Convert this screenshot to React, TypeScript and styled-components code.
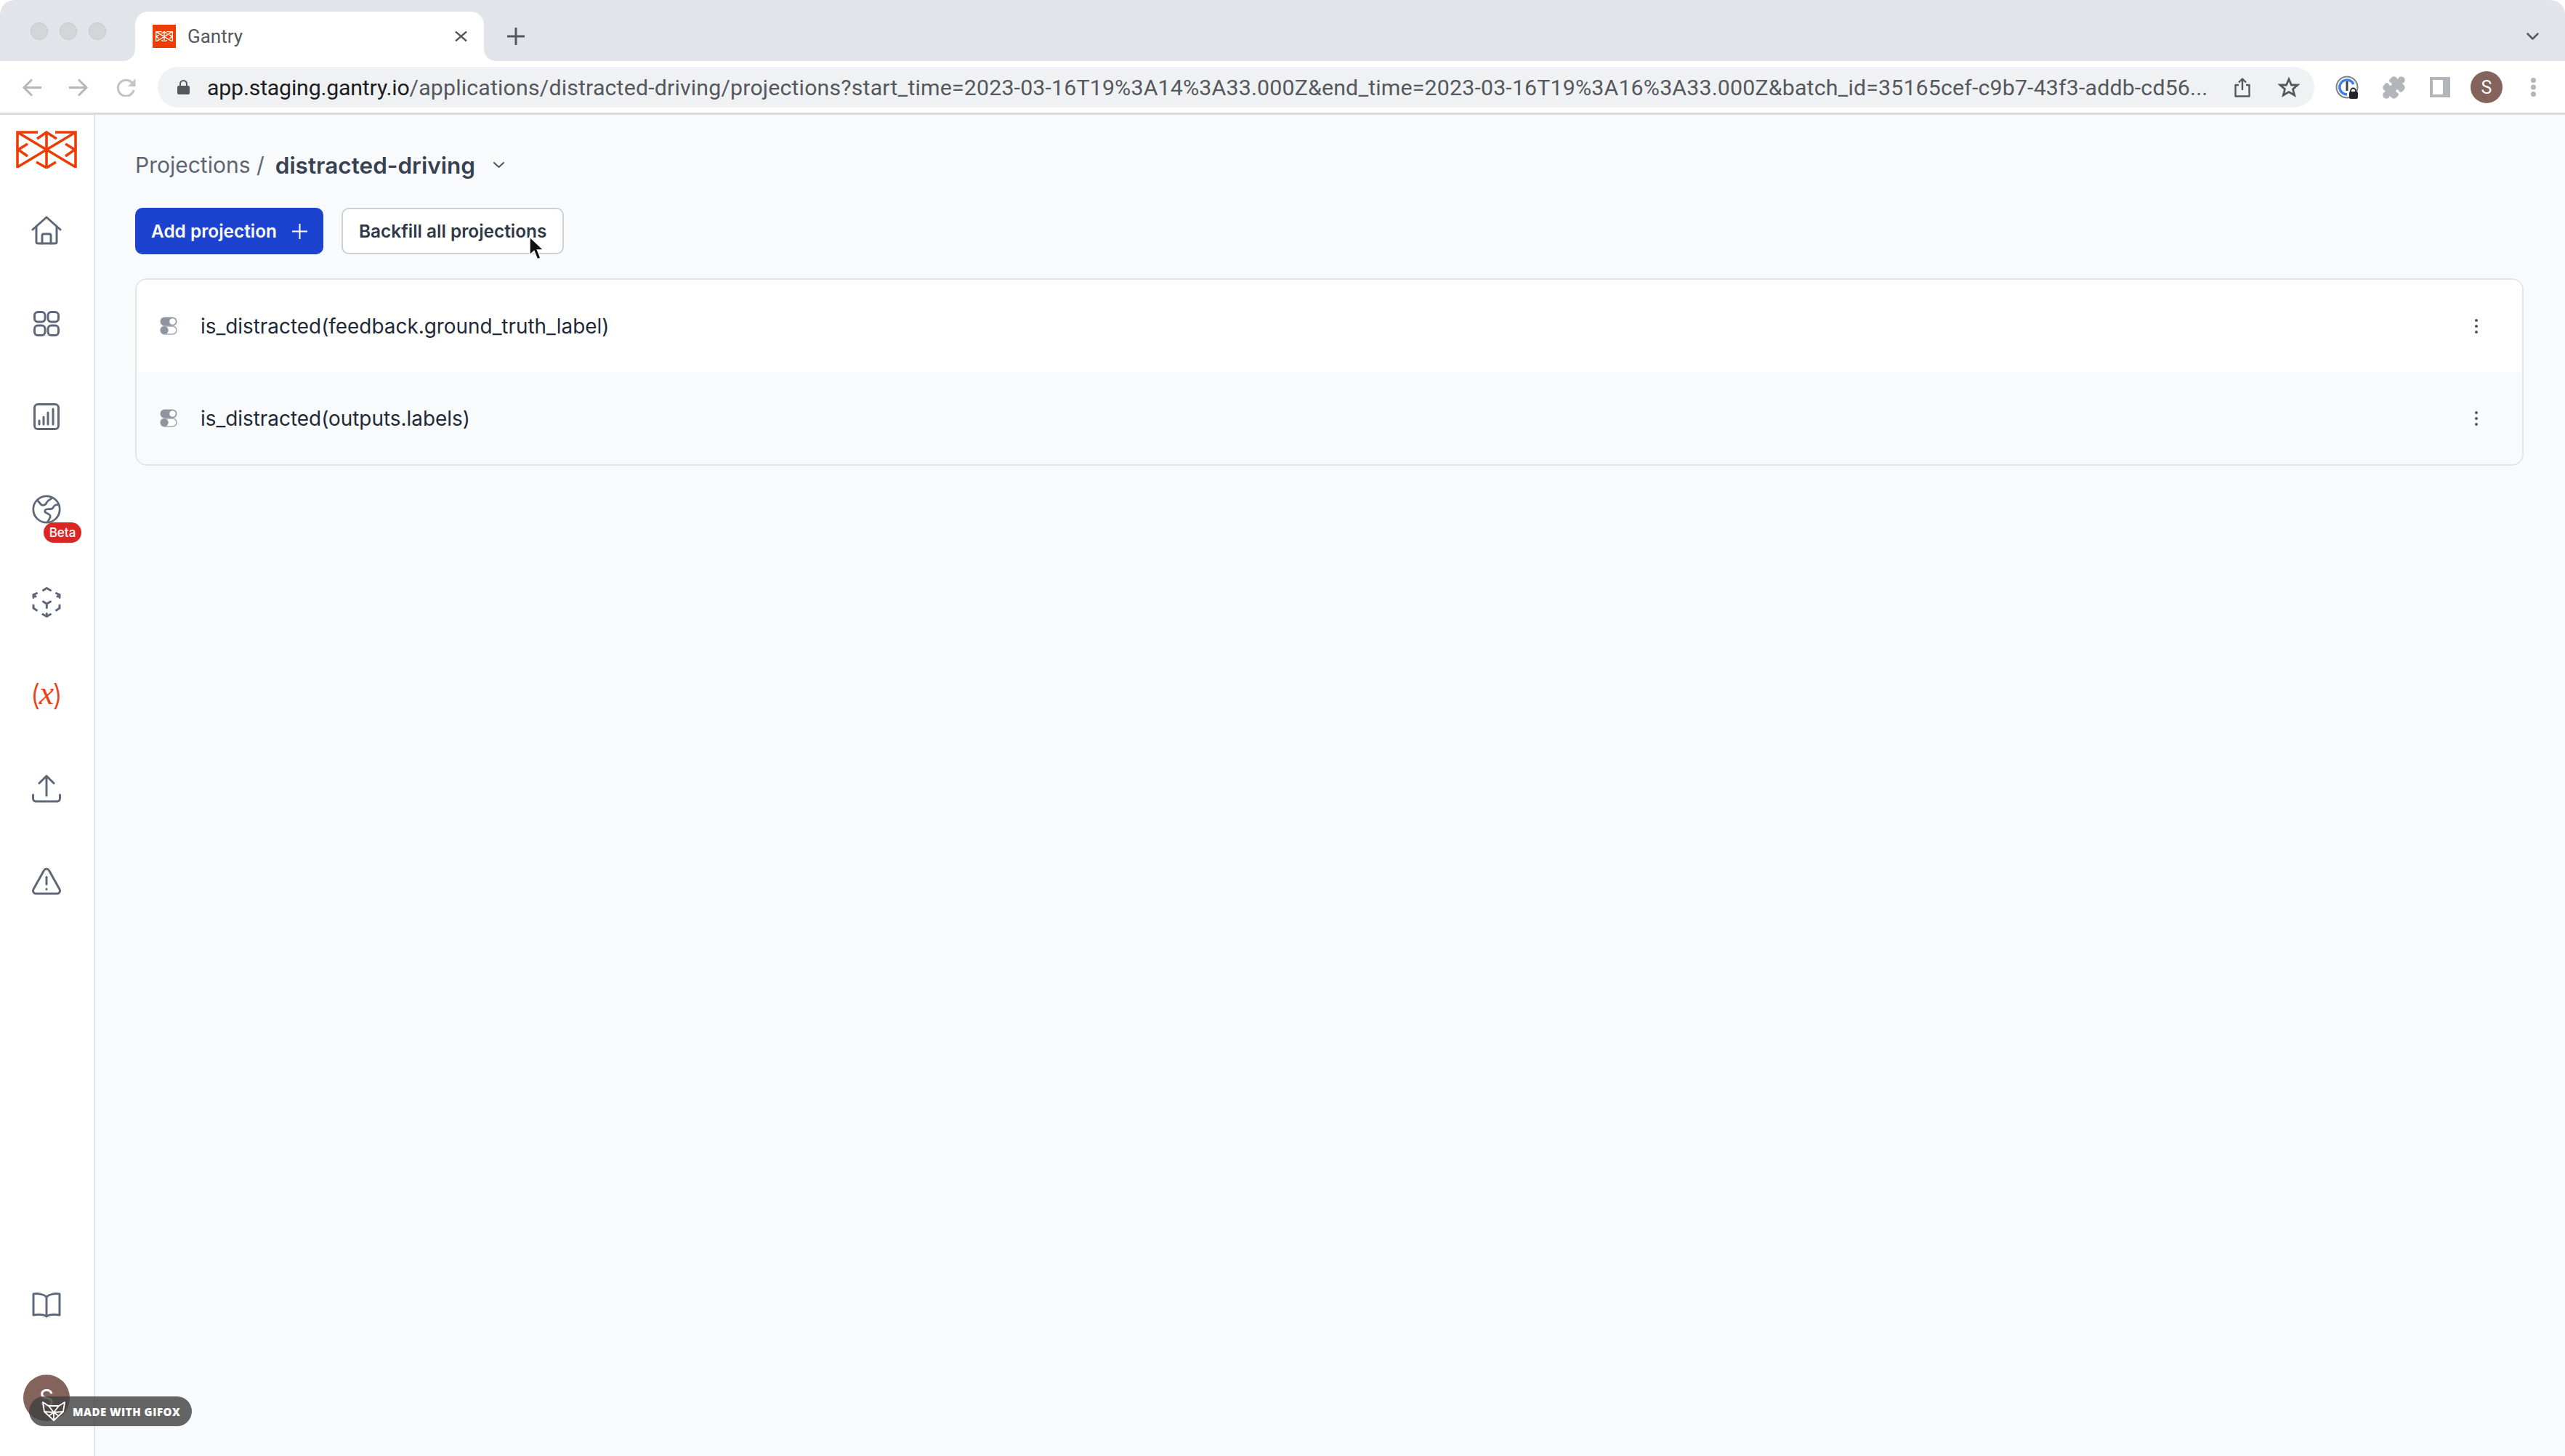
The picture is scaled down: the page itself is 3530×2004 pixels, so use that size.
import * as React from "react";
import styled, { createGlobalStyle } from "styled-components";
import { Puzzle } from "lucide-react";

const GlobalStyle = createGlobalStyle`
  html, body {
    margin: 0;
    padding: 0;
    background: #fff;
  }
  * {
    box-sizing: border-box;
  }
`;

const Window = styled.div`
  position: relative;
  display: flex;
  flex-direction: column;
  width: 3530px;
  height: 2004px;
  overflow: hidden;
  font-family: Inter, "Liberation Sans", sans-serif;
  background: #fff;
`;

// Browser chrome
const TabStrip = styled.div`
  display: flex;
  align-items: flex-end;
  height: 84px;
  padding-left: 42px;
  background: #e1e4e8;
  border-radius: 20px 20px 0 0;
`;

const TrafficLights = styled.div`
  display: flex;
  gap: 16px;
  align-self: flex-start;
  margin-top: 31px;
`;

const Light = styled.span`
  width: 24px;
  height: 24px;
  border-radius: 50%;
  background: #d3d5d8;
  border: 1px solid #c5c7cb;
`;

const Tab = styled.div`
  position: relative;
  display: flex;
  align-items: center;
  width: 480px;
  height: 68px;
  margin-left: 40px;
  padding: 0 23px 0 24px;
  background: #fff;
  border-radius: 18px 18px 0 0;

  &:before,
  &:after {
    content: "";
    position: absolute;
    bottom: 0;
    width: 16px;
    height: 16px;
    background: radial-gradient(circle at var(--cx) 0, #e1e4e8 15.5px, #fff 16px);
  }
  &:before {
    --cx: 0;
    left: -16px;
  }
  &:after {
    --cx: 100%;
    right: -16px;
  }
`;

const Favicon = styled.span`
  display: flex;
  align-items: center;
  justify-content: center;
  width: 32px;
  height: 32px;
  background: #ee3c06;
`;

const TabTitle = styled.span`
  flex: 1;
  margin-left: 16px;
  font-family: Roboto, sans-serif;
  font-size: 26px;
  color: #55585e;
`;

const NewTab = styled.span`
  display: flex;
  align-self: center;
  margin: 16px 0 0 32px;
`;

const TabListChevron = styled.span`
  display: flex;
  align-self: center;
  margin: 16px 35px 0 auto;
`;

const Toolbar = styled.div`
  display: flex;
  align-items: center;
  height: 74px;
  padding: 1px 0 0 11px;
  background: #fff;
  border-bottom: 3px solid #d9dbde;
`;

const NavButton = styled.span`
  display: flex;
  justify-content: center;
  width: 65px;
`;

const AddressBar = styled.div`
  display: flex;
  align-items: center;
  width: 2968px;
  height: 56px;
  margin-left: 11px;
  padding: 0 20px 0 27px;
  background: #eff1f3;
  border-radius: 28px;
`;

const Lock = styled.span`
  display: flex;
  margin-right: 24px;
`;

const Url = styled.div`
  flex: 1;
  overflow: hidden;
  white-space: nowrap;
  font-family: Roboto, sans-serif;
  font-size: 30.3px;
  letter-spacing: 0.17px;
  color: #55585e;

  b {
    font-weight: 400;
    letter-spacing: -0.2px;
    color: #1d1e22;
  }
`;

const BarActions = styled.div`
  display: flex;
  align-items: center;
  gap: 38px;
`;

const ToolSlots = styled.div`
  display: flex;
  margin-left: 13px;
`;

const ToolSlot = styled.span`
  display: flex;
  align-items: center;
  justify-content: center;
  width: 64px;
  height: 44px;
`;

const SidePanelIcon = styled.span`
  width: 28px;
  height: 28px;
  background: #fff;
  border: 4px solid #b3b5ba;
  border-right-width: 10px;
`;

const ProfileAvatar = styled.span`
  display: flex;
  align-items: center;
  justify-content: center;
  width: 44px;
  height: 44px;
  border-radius: 50%;
  background: #84635c;
  color: #fff;
  font-family: Roboto, sans-serif;
  font-size: 25px;
`;

// App
const Body = styled.div`
  flex: 1;
  display: flex;
  min-height: 0;
`;

const Sidebar = styled.nav`
  display: flex;
  flex-direction: column;
  align-items: center;
  flex: none;
  width: 131px;
  padding: 0 1px 48px 0;
  background: #fff;
  border-right: 2px solid #e3e5ea;
`;

const LogoWrap = styled.div`
  display: flex;
  align-items: flex-start;
  height: 95px;
  padding-top: 22px;
`;

const NavItem = styled.div<{ $active?: boolean }>`
  position: relative;
  display: flex;
  align-items: center;
  justify-content: center;
  width: 100%;
  height: 128px;
  color: ${(p) => (p.$active ? "#e8421a" : "#5f6879")};
`;

const Spacer = styled.div`
  flex: 1;
`;

const BetaBadge = styled.span`
  position: absolute;
  left: 60px;
  top: 82px;
  width: 52px;
  height: 28px;
  border-radius: 14px;
  background: #dc2626;
  color: #fff;
  font-size: 17px;
  font-weight: 500;
  line-height: 28px;
  text-align: center;
`;

const VariableIcon = styled.span`
  display: flex;
  align-items: center;
  line-height: 1;
`;

const Paren = styled.span`
  font-family: Inter, sans-serif;
  font-size: 40px;
  font-weight: 300;
`;

const VarX = styled.span`
  margin: -6px -2px 0;
  font-family: "Liberation Serif", serif;
  font-style: italic;
  font-size: 46px;
  font-weight: 400;
`;

const UserAvatar = styled.div`
  display: flex;
  align-items: center;
  justify-content: center;
  width: 64px;
  height: 64px;
  margin-top: 32px;
  border-radius: 50%;
  background: #84635c;
  color: #fff;
  font-size: 32px;
`;

const Main = styled.main`
  flex: 1;
  min-width: 0;
  padding: 47px 57px 0 55px;
  background: #f9fafb;
`;

const Breadcrumb = styled.div`
  display: flex;
  align-items: center;
  height: 44px;
`;

const Crumb = styled.span`
  font-size: 30px;
  color: #5d6574;
`;

const CurrentCrumb = styled.span`
  margin-left: 15px;
  font-size: 31.5px;
  font-weight: 600;
  color: #374151;
`;

const CrumbChevron = styled.span`
  display: flex;
  margin-left: 24px;
`;

const Actions = styled.div`
  display: flex;
  gap: 25px;
  margin-top: 37px;
`;

const Button = styled.button<{ $primary?: boolean }>`
  position: relative;
  display: flex;
  align-items: center;
  justify-content: center;
  gap: 21px;
  height: 64px;
  padding: 0 22px;
  border-radius: 10px;
  border: ${(p) => (p.$primary ? "none" : "2px solid #cdd0d6")};
  background: ${(p) => (p.$primary ? "#1c43d0" : "#fff")};
  color: ${(p) => (p.$primary ? "#fff" : "#2f3847")};
  font-family: Inter, sans-serif;
  font-size: 24.4px;
  font-weight: 600;
`;

const Cursor = styled.svg`
  position: absolute;
  left: 255px;
  top: 36px;
`;

const Card = styled.div`
  margin-top: 33px;
  overflow: hidden;
  border: 2px solid #e3e5ea;
  border-radius: 16px;
`;

const Row = styled.div<{ $white?: boolean }>`
  display: flex;
  align-items: center;
  height: 127px;
  padding: 0 61px 0 32px;
  background: ${(p) => (p.$white ? "#fff" : "#f9fafb")};
`;

const RowName = styled.span`
  flex: 1;
  margin-left: 32px;
  font-size: 27.9px;
  color: #1f2937;
`;

const MoreDots = styled.span`
  display: flex;
  flex-direction: column;
  gap: 4px;

  i {
    width: 4px;
    height: 4px;
    border-radius: 50%;
    background: #4b5563;
  }
`;

const GifoxBadge = styled.div`
  position: absolute;
  left: 40px;
  top: 1922px;
  display: flex;
  align-items: center;
  gap: 10px;
  width: 224px;
  height: 41px;
  padding-left: 18px;
  border-radius: 21px;
  background: rgba(62, 62, 62, 0.8);
  color: #fff;
  font-family: "Open Sans", sans-serif;
  font-size: 15px;
  font-weight: 800;
  letter-spacing: 0.5px;
  white-space: nowrap;
`;

// Icons
const GantryMark = ({ size, color }: { size: number; color: string }) => (
  <svg width={size} height={(size * 52) / 84} viewBox="0 0 84 52" fill="none" stroke={color} strokeWidth={size > 40 ? 3.6 : 5}>
    <path d="M30 2H2V51M2 2L82 50M54 2H82V51M82 2L2 50M42 1V51" />
    <path d="M29 11L42 2L56 11M28 43L42 51L55 43M16 18L3 26L16 35M68 18L81 26L68 35" />
  </svg>
);

const HomeIcon = () => (
  <svg width="42" height="40" viewBox="0 0 42 40" fill="none" stroke="currentColor" strokeWidth="3" strokeLinecap="round" strokeLinejoin="round">
    <path d="M2 19L21 2L40 19" />
    <path d="M7 15V36a2 2 0 0 0 2 2H33a2 2 0 0 0 2-2V15" />
    <path d="M15 38V27a2 2 0 0 1 2-2h8a2 2 0 0 1 2 2V38" />
  </svg>
);

const GridIcon = () => (
  <svg width="36" height="35" viewBox="0 0 36 35" fill="none" stroke="currentColor" strokeWidth="3">
    <rect x="1.5" y="1.5" width="14.5" height="13.5" rx="4.5" />
    <rect x="20" y="1.5" width="14.5" height="13.5" rx="4.5" />
    <rect x="1.5" y="20" width="14.5" height="13.5" rx="4.5" />
    <rect x="20" y="20" width="14.5" height="13.5" rx="4.5" />
  </svg>
);

const ChartIcon = () => (
  <svg width="36" height="37" viewBox="0 0 36 37" fill="none" stroke="currentColor" strokeWidth="3" strokeLinecap="round">
    <rect x="1.5" y="1.5" width="33" height="34" rx="4.5" />
    <path d="M8 29V24M14 29V19M20 29V13M27 29V8" />
  </svg>
);

const GlobeIcon = () => (
  <svg width="40" height="40" viewBox="0 0 40 40" fill="none" stroke="currentColor" strokeWidth="2.800" strokeLinejoin="round">
    <circle cx="20" cy="20" r="18.2" />
    <path d="M7 7L13 14C16 15 19 14 20 11C21 8 25 7 28 4" />
    <path d="M37 14C33 13 30 15 29 18C27 21 23 19 20 20C17 21 17 24 20 25C24 27 26 28 25 31C24 34 22 36 21 38" />
  </svg>
);

const CubeIcon = () => (
  <svg width="40" height="42" viewBox="0 0 40 42" fill="none" stroke="currentColor" strokeWidth="3" strokeLinecap="round" strokeLinejoin="round">
    <path d="M15.500 4.500L20.300 1.500L25.500 4.500" />
    <path d="M2 14.500V10.500L6.500 8.500M2 10.500L5 13" />
    <path d="M38 14.500V10.500L33.500 8.500M38 10.500L35 13" />
    <path d="M2 25V29L6.500 32" />
    <path d="M38 25V29L33.500 32" />
    <path d="M15 37.500L20.300 40.500L25.500 37.500M20.300 36.500V40.500" />
    <path d="M15.500 20L20.300 23.300L25.500 20M20.300 23.300V28.500" />
  </svg>
);

const UploadIcon = () => (
  <svg width="40" height="39" viewBox="0 0 40 39" fill="none" stroke="currentColor" strokeWidth="3" strokeLinecap="round" strokeLinejoin="round">
    <path d="M20 2V29M10 12L20 2L30 12" />
    <path d="M1.5 28V33a4 4 0 0 0 4 4H34.500a4 4 0 0 0 4-4V28" />
  </svg>
);

const WarningIcon = () => (
  <svg width="42" height="38" viewBox="0 0 42 38" fill="none" stroke="currentColor" strokeWidth="3" strokeLinecap="round" strokeLinejoin="round">
    <path d="M17.500 4a4 4 0 0 1 7 0L39 30a4 4 0 0 1-3.500 6H6.500a4 4 0 0 1-3.500-6Z" />
    <path d="M21 13V23M21 29.500V30" />
  </svg>
);

const BookIcon = () => (
  <svg width="40" height="35" viewBox="0 0 40 35" fill="none" stroke="currentColor" strokeWidth="3" strokeLinejoin="round">
    <path d="M20 6C16 2 8 1 2 2V31C8 30 16 30 20 33C24 30 32 30 38 31V2C32 1 24 2 20 6Z" />
    <path d="M20 6V33" />
  </svg>
);

const ToggleIcon = () => (
  <svg width="24" height="25" viewBox="0 0 24 25">
    <rect x="0.5" y="0.500" width="23" height="12" rx="6" fill="#8f94a0" />
    <circle cx="17.500" cy="6.500" r="4.300" fill="#fff" />
    <rect x="1" y="13" width="22" height="11" rx="5.500" fill="#fff" stroke="#a2a6b0" strokeWidth="1.500" />
    <circle cx="6.500" cy="18.500" r="5.200" fill="#8f94a0" />
  </svg>
);

const Chevron = ({ w, h, color, sw }: { w: number; h: number; color: string; sw: number }) => (
  <svg width={w} height={h} viewBox={`0 0 ${w} ${h}`} fill="none" stroke={color} strokeWidth={sw} strokeLinecap="round" strokeLinejoin="round">
    <path d={`M${sw} ${sw}L${w / 2} ${h - sw}L${w - sw} ${sw}`} />
  </svg>
);

const Arrow = ({ flip }: { flip?: boolean }) => (
  <svg width="27" height="25" viewBox="0 0 27 25" fill="none" stroke="#b4b7bc" strokeWidth="3" style={flip ? { transform: "scaleX(-1)" } : undefined}>
    <path d="M27 12.500H3M14 1.500L3 12.500L14 23.500" />
  </svg>
);

const ReloadIcon = () => (
  <svg width="27" height="25" viewBox="0 0 27 25" fill="none">
    <path d="M22.500 7A11 11 0 1 0 24 16" stroke="#c0c3c7" strokeWidth="3" />
    <path d="M26.500 0V11H16Z" fill="#c0c3c7" />
  </svg>
);

const LockIcon = () => (
  <svg width="17" height="20" viewBox="0 0 17 20" fill="none">
    <path d="M4 9V5.500a4.500 4.500 0 0 1 9 0V9" stroke="#55585e" strokeWidth="2" />
    <rect y="8" width="17" height="12" rx="2" fill="#55585e" />
  </svg>
);

const ShareIcon = () => (
  <svg width="22" height="27" viewBox="0 0 22 27" fill="none" stroke="#55585e" strokeWidth="2.400" strokeLinejoin="round">
    <path d="M6 10H1.500V25.500H20.500V10H16" />
    <path d="M11 17V1.500M6 6.500L11 1.500L16 6.500" />
  </svg>
);

const StarIcon = () => (
  <svg width="30" height="28" viewBox="0 0 30 28" fill="none" stroke="#55585e" strokeWidth="2.800" strokeLinejoin="miter">
    <path d="M15 3L18.500 11H27L20.500 16.800L22.700 25L15 20.500L7.300 25L9.500 16.800L3 11H11.500Z" />
  </svg>
);

const OnePasswordIcon = () => (
  <svg width="32" height="32" viewBox="0 0 32 32" fill="none">
    <circle cx="16" cy="16" r="14.500" stroke="#7d8186" strokeWidth="2" />
    <path d="M25 12A10 10 0 1 0 16 26" stroke="#3f7fe6" strokeWidth="3.500" />
    <rect x="14.500" y="8" width="3" height="13" fill="#3d4148" />
    <path d="M21 23v-2a3.500 3.500 0 0 1 7 0v2" stroke="#22262c" strokeWidth="1.800" />
    <rect x="19" y="22" width="12" height="10" rx="2" fill="#22262c" />
  </svg>
);

const MenuDotsIcon = () => (
  <svg width="7" height="26" viewBox="0 0 7 26" fill="#b3b5ba">
    <circle cx="3.500" cy="3.500" r="3.500" />
    <circle cx="3.500" cy="13" r="3.500" />
    <circle cx="3.500" cy="22.500" r="3.500" />
  </svg>
);

const PlusIcon = ({ size, color, sw }: { size: number; color: string; sw: number }) => (
  <svg width={size} height={size} viewBox={`0 0 ${size} ${size}`} stroke={color} strokeWidth={sw}>
    <path d={`M${size / 2} 0V${size}M0 ${size / 2}H${size}`} />
  </svg>
);

const CloseIcon = () => (
  <svg width="17" height="14" viewBox="0 0 17 14" stroke="#55585e" strokeWidth="2.400">
    <path d="M1 0.500L16 13.500M16 0.500L1 13.500" />
  </svg>
);

const FoxIcon = () => (
  <svg width="32" height="27" viewBox="0 0 32 27" fill="none" stroke="#fff" strokeWidth="1.800" strokeLinejoin="round">
    <path d="M1 1L9 6H23L31 1L29 14L16 26L3 14Z" />
    <path d="M9 6L16 15L23 6M3 14L16 15L29 14M16 15V26M9 20L16 15L23 20" />
  </svg>
);

const CursorIcon = () => (
  <Cursor width="24" height="36" viewBox="0 0 24 34">
    <path d="M2 1V26L8 20.500L12.500 32L17 30L12.500 19H21Z" fill="#111" stroke="#fff" strokeWidth="1.500" />
  </Cursor>
);

const PROJECTIONS = [
  { name: "is_distracted(feedback.ground_truth_label)", white: true },
  { name: "is_distracted(outputs.labels)", white: false },
];

const App = () => {
  return (
    <Window>
      <GlobalStyle />
      <TabStrip>
        <TrafficLights>
          <Light />
          <Light />
          <Light />
        </TrafficLights>
        <Tab>
          <Favicon>
            <GantryMark size={24} color="#fff" />
          </Favicon>
          <TabTitle>Gantry</TabTitle>
          <CloseIcon />
        </Tab>
        <NewTab>
          <PlusIcon size={24} color="#55585e" sw={3} />
        </NewTab>
        <TabListChevron>
          <Chevron w={19} h={12} color="#55585e" sw={2.5} />
        </TabListChevron>
      </TabStrip>
      <Toolbar>
        <NavButton>
          <Arrow />
        </NavButton>
        <NavButton>
          <Arrow flip />
        </NavButton>
        <NavButton>
          <ReloadIcon />
        </NavButton>
        <AddressBar>
          <Lock>
            <LockIcon />
          </Lock>
          <Url>
            <b>app.staging.gantry.io</b>
            /applications/distracted-driving/projections?start_time=2023-03-16T19%3A14%3A33.000Z&amp;end_time=2023-03-16T19%3A16%3A33.000Z&amp;batch_id=35165cef-c9b7-43f3-addb-cd56...
          </Url>
          <BarActions>
            <ShareIcon />
            <StarIcon />
          </BarActions>
        </AddressBar>
        <ToolSlots>
          <ToolSlot>
            <OnePasswordIcon />
          </ToolSlot>
          <ToolSlot>
            <Puzzle size={33} color="#b3b5ba" fill="#b3b5ba" />
          </ToolSlot>
          <ToolSlot>
            <SidePanelIcon />
          </ToolSlot>
          <ToolSlot>
            <ProfileAvatar>S</ProfileAvatar>
          </ToolSlot>
          <ToolSlot>
            <MenuDotsIcon />
          </ToolSlot>
        </ToolSlots>
      </Toolbar>
      <Body>
        <Sidebar>
          <LogoWrap>
            <GantryMark size={84} color="#ee3c06" />
          </LogoWrap>
          <NavItem>
            <HomeIcon />
          </NavItem>
          <NavItem>
            <GridIcon />
          </NavItem>
          <NavItem>
            <ChartIcon />
          </NavItem>
          <NavItem>
            <GlobeIcon />
            <BetaBadge>Beta</BetaBadge>
          </NavItem>
          <NavItem>
            <CubeIcon />
          </NavItem>
          <NavItem $active>
            <VariableIcon>
              <Paren>(</Paren>
              <VarX>x</VarX>
              <Paren>)</Paren>
            </VariableIcon>
          </NavItem>
          <NavItem>
            <UploadIcon />
          </NavItem>
          <NavItem>
            <WarningIcon />
          </NavItem>
          <Spacer />
          <NavItem>
            <BookIcon />
          </NavItem>
          <UserAvatar>S</UserAvatar>
        </Sidebar>
        <Main>
          <Breadcrumb>
            <Crumb>Projections /</Crumb>
            <CurrentCrumb>distracted-driving</CurrentCrumb>
            <CrumbChevron>
              <Chevron w={17} h={10} color="#4b5563" sw={2} />
            </CrumbChevron>
          </Breadcrumb>
          <Actions>
            <Button $primary>
              Add projection
              <PlusIcon size={21} color="#fff" sw={2} />
            </Button>
            <Button>
              Backfill all projections
              <CursorIcon />
            </Button>
          </Actions>
          <Card>
            {PROJECTIONS.map((row) => (
              <Row key={row.name} $white={row.white}>
                <ToggleIcon />
                <RowName>{row.name}</RowName>
                <MoreDots>
                  <i />
                  <i />
                  <i />
                </MoreDots>
              </Row>
            ))}
          </Card>
        </Main>
      </Body>
      <GifoxBadge>
        <FoxIcon />
        MADE WITH GIFOX
      </GifoxBadge>
    </Window>
  );
};

export default App;
